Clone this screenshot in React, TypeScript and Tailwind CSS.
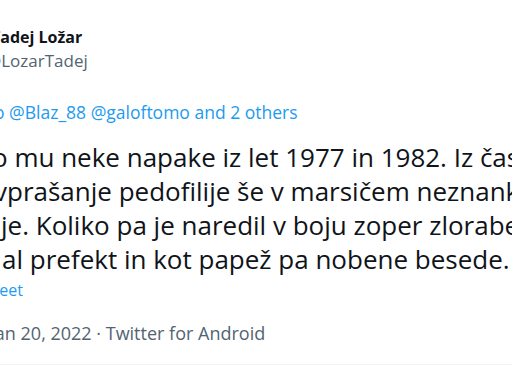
export default function App() {
  return (
    <div className="w-[512px] h-[384px] overflow-hidden bg-white font-['Open_Sans',sans-serif]">
      <div className="pt-[25px]">
        {/* author */}
        <div className="-ml-[9px] whitespace-nowrap text-[16px] leading-[24px] font-bold text-[#0f1419]">
          Tadej Ložar
        </div>
        <div className="-ml-[14px] whitespace-nowrap text-[17px] leading-[24px] text-[#536471]">
          @LozarTadej
        </div>

        {/* replying to */}
        <div className="mt-[27px] -ml-[6px] whitespace-nowrap text-[17.5px] leading-[24px] text-[#1d9bf0]">
          o @Blaz_88 @galoftomo and 2 others
        </div>

        {/* tweet body */}
        <div className="mt-[16px] text-[26px] leading-[34px] text-[#0f1419] whitespace-nowrap">
          <div className="-ml-[8px]">o mu neke napake iz let 1977 in 1982. Iz časa</div>
          <div className="-ml-[6px]">vprašanje pedofilije še v marsičem neznanka</div>
          <div className="ml-[1px]">je. Koliko pa je naredil v boju zoper zlorabe</div>
          <div className="ml-[2px]">al prefekt in kot papež pa nobene besede.</div>
        </div>

        <div className="mt-[3px] -ml-[22px] whitespace-nowrap text-[16px] leading-[22px] text-[#1d9bf0]">
          Tweet
        </div>

        {/* meta */}
        <div className="mt-[20px] -ml-[10px] whitespace-nowrap text-[18px] leading-[24px] text-[#536471]">
          Jan 20, 2022 · Twitter for Android
        </div>

        <div className="mt-[19px] border-t border-[#eff3f4]" />
      </div>
    </div>
  )
}
